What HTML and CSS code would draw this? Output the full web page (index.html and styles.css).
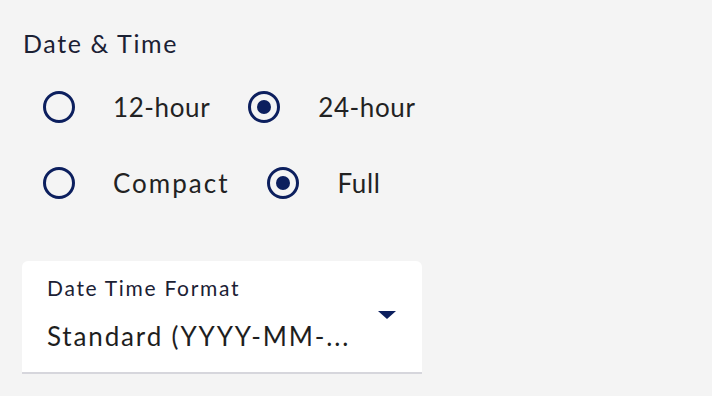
FILE: index.html
```html
<!DOCTYPE html>
<html>
<head>
<meta charset="utf-8">
<link rel="stylesheet" href="styles.css">
</head>
<body>
<div class="panel">
  <div class="title">Date &amp; Time</div>
  <div class="row">
    <label class="opt opt-a"><span class="radio"></span><span class="txt">12-hour</span></label>
    <label class="opt"><span class="radio on"></span><span class="txt">24-hour</span></label>
  </div>
  <div class="row row2">
    <label class="opt opt-a"><span class="radio"></span><span class="txt txt-wide">Compact</span></label>
    <label class="opt"><span class="radio on"></span><span class="txt">Full</span></label>
  </div>
  <div class="select">
    <div class="sel-body">
      <div class="sel-label">Date Time Format</div>
      <div class="sel-value">Standard (YYYY-MM-...</div>
    </div>
    <span class="caret"></span>
  </div>
</div>
</body>
</html>
```
FILE: styles.css
```css
html, body {
  margin: 0;
  padding: 0;
  background: #f4f4f4;
}
body {
  font-family: "Lato", "Noto Sans", sans-serif;
  color: #1e1e1e;
}
.panel {
  padding: 27px 0 0 23px;
}
.title {
  font-size: 25px;
  line-height: 32px;
  letter-spacing: 1.6px;
  color: #1b2134;
}
.row {
  display: flex;
  align-items: center;
  margin-top: 32px;
  margin-left: 20px;
}
.row2 {
  margin-top: 44px;
}
.opt {
  display: flex;
  align-items: center;
}
.opt-a {
  margin-right: 38px;
}
.radio {
  box-sizing: border-box;
  flex: none;
  width: 32px;
  height: 32px;
  border: 3px solid #0c1f5e;
  border-radius: 50%;
  display: flex;
  align-items: center;
  justify-content: center;
}
.radio.on::after {
  content: "";
  width: 14px;
  height: 14px;
  border-radius: 50%;
  background: #0c1f5e;
}
.txt {
  font-size: 26px;
  line-height: 32px;
  letter-spacing: 0.6px;
  margin-left: 38px;
  color: #222;
}
.txt-wide {
  letter-spacing: 2px;
}
.select {
  box-sizing: border-box;
  width: 400px;
  height: 113px;
  margin-top: 62px;
  margin-left: -1px;
  background: #fff;
  border-radius: 6px 6px 0 0;
  border-bottom: 2px solid #d6d6dc;
  display: flex;
  justify-content: space-between;
  padding: 15px 26px 0 25px;
}
.sel-label {
  font-size: 21px;
  line-height: 24px;
  letter-spacing: 1.7px;
  color: #1b2134;
}
.sel-value {
  font-size: 26px;
  line-height: 32px;
  letter-spacing: 1.85px;
  margin-top: 20px;
  color: #1e1e1e;
}
.caret {
  flex: none;
  margin-top: 35px;
  width: 0;
  height: 0;
  border-left: 9px solid transparent;
  border-right: 9px solid transparent;
  border-top: 8px solid #0c1f5e;
}
```
